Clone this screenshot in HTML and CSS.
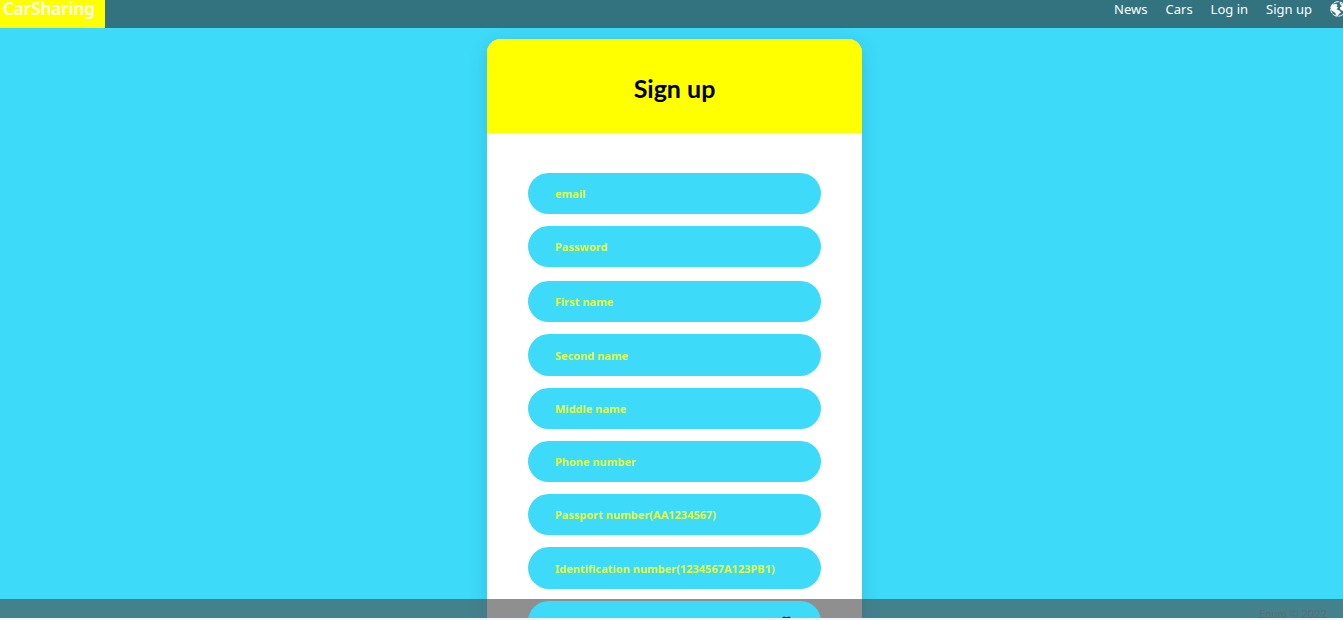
FILE: index.html
```html
<!DOCTYPE html>
<html lang="en">
<head>
<meta charset="utf-8">
<title>CarSharing - Sign up</title>
<link rel="stylesheet" href="styles.css">
</head>
<body>
<div class="app">
  <header class="header">
    <a class="brand" href="#">CarSharing</a>
    <nav class="nav">
      <a href="#">News</a>
      <a href="#">Cars</a>
      <a href="#">Log in</a>
      <a href="#">Sign up</a>
      <button class="language" type="button" aria-label="Language">
        <svg viewBox="0 0 16 16" width="16" height="16" aria-hidden="true">
          <circle cx="8" cy="8" r="7.3" fill="none" stroke="#fff" stroke-width="1" stroke-dasharray="5 1"/>
          <path fill="#fff" d="M.8 6 2.500 3.500l3.500-.7L7.500 4 6.500 5.500l1.700 1L6.500 8.500l3 1 1.500 2-2 1.500L7.500 15.200 5.800 14 5.500 12 3 10.500 1 8.500zM9.500 1.500l3 1.500 2.500 3.500V9l-1.500 1.800L12 9.500 10.200 8.500 10 6.500l2-1.500-1.500-1z"/>
        </svg>
      </button>
    </nav>
  </header>
  <main class="main">
    <section class="card">
      <h1 class="card-title">Sign up</h1>
      <form class="form">
        <div class="group">
          <input class="field" type="email" placeholder="email" aria-label="email">
          <input class="field" type="password" placeholder="Password" aria-label="Password">
        </div>
        <div class="group">
          <input class="field" type="text" placeholder="First name" aria-label="First name">
          <input class="field" type="text" placeholder="Second name" aria-label="Second name">
          <input class="field" type="text" placeholder="Middle name" aria-label="Middle name">
          <input class="field" type="tel" placeholder="Phone number" aria-label="Phone number">
          <input class="field" type="text" placeholder="Passport number(AA1234567)" aria-label="Passport number">
          <input class="field" type="text" placeholder="Identification number(1234567A123PB1)" aria-label="Identification number">
          <input class="field" type="date" aria-label="Date of birth">
        </div>
      </form>
    </section>
  </main>
  <footer class="footer">Enum © 2022</footer>
</div>
</body>
</html>
```
FILE: styles.css
```css
* {
  box-sizing: border-box;
}

body {
  margin: 0;
  background: #f0f6fc;
  font-family: "Noto Sans", "Open Sans", sans-serif;
}

.app {
  position: relative;
  display: flex;
  flex-direction: column;
  height: calc(100vh - 2px);
  overflow: hidden;
  background: #3ddafa;
}

.header {
  display: flex;
  flex: none;
  justify-content: space-between;
  height: 28px;
  background: #33727f;
}

.brand {
  padding: 0 10px 0 3px;
  background: #ff0;
  color: #fff;
  font-size: 17px;
  font-weight: 600;
  line-height: 18px;
  text-decoration: none;
}

.nav {
  display: flex;
  gap: 18px;
  align-items: flex-start;
  margin-right: -3px;
}

.nav a {
  color: #fff;
  font-size: 13px;
  line-height: 18px;
  text-decoration: none;
}

.language {
  display: flex;
  padding: 1px 0 0;
  border: 0;
  background: none;
}

.main {
  display: flex;
  justify-content: center;
  padding: 11px 0 0 6px;
}

.card {
  flex: 0 1 375px;
  border-radius: 14px;
  background: #fff;
  box-shadow: 0 4px 20px rgba(0, 0, 0, 0.12);
}

.card-title {
  margin: 0;
  padding: 34px 0 30px;
  border-radius: 14px 14px 0 0;
  background: #ff0;
  color: #000;
  font-family: Lato, sans-serif;
  font-size: 25px;
  font-weight: 700;
  line-height: 30px;
  text-align: center;
}

.form {
  display: grid;
  gap: 14px;
  padding: 40px 41px;
}

.group {
  display: grid;
  gap: 12px;
}

.field {
  position: relative;
  z-index: 2;
  width: 100%;
  height: 41px;
  padding: 0 27px;
  border: 0;
  border-radius: 21px;
  background: #3ddafa;
  color: #3ddafa;
  font-family: "Noto Sans", "Open Sans", sans-serif;
  font-size: 11px;
  font-weight: 700;
}

.group + .group .field:nth-child(4n + 2) {
  height: 42px;
}

.field::placeholder {
  color: #e4fa3c;
  opacity: 1;
}

.footer {
  position: absolute;
  right: 0;
  bottom: 0;
  left: 0;
  z-index: 1;
  height: 19px;
  padding: 6px 16px 0 0;
  background: rgba(72, 72, 72, 0.61);
  color: #5a6e74;
  font-family: Lato, sans-serif;
  font-size: 11px;
  line-height: 18px;
  text-align: right;
}
```
